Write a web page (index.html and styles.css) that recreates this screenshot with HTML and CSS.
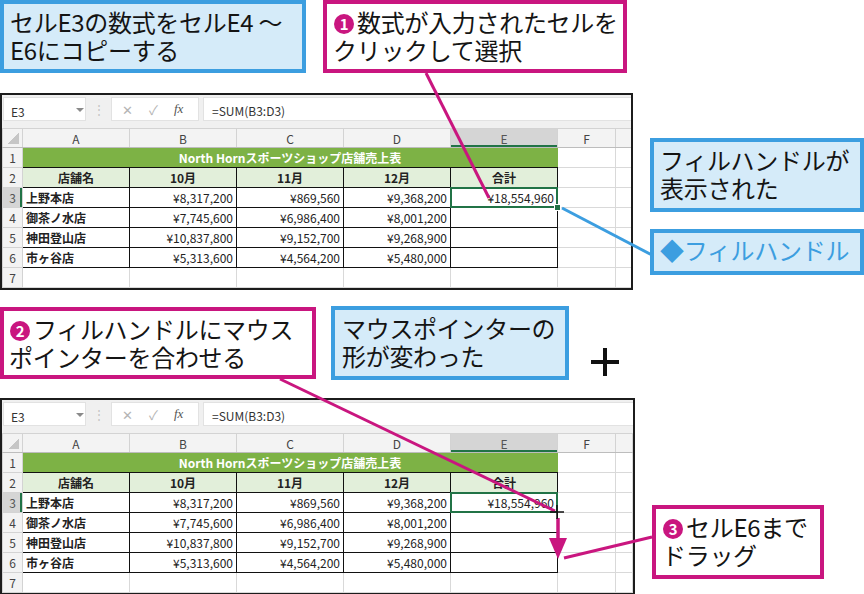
FILE: index.html
```html
<!DOCTYPE html>
<html>
<head>
    <meta charset="UTF-8">
    <title>フィルハンドルで数式をコピー</title>
    <link rel="stylesheet" href="styles.css">
</head>
<body>
    <section class="step step1">
        <div class="notes">
            <p class="note blue note-a">セルE3の数式をセルE4 ～<br>E6にコピーする</p>
            <p class="note pink note-b"><span class="num">1</span>数式が入力されたセルを<br>クリックして選択</p>
        </div>
        <div class="stage">
            <div class="sheet">
                <div class="fbar">
                    <div class="namebox">E3<span class="caret"></span></div>
                    <span class="grip">⋮</span>
                    <div class="fxbtns"><span>✕</span><span>✓</span><i>fx</i></div>
                    <div class="formula">=SUM(B3:D3)</div>
                </div>
                <table class="grid">
                    <colgroup><col class="c-rh"><col class="c-w"><col class="c-w"><col class="c-w"><col class="c-w"><col class="c-w"><col class="c-f"><col></colgroup>
                    <tr class="cols"><th class="corner"></th><th>A</th><th>B</th><th>C</th><th>D</th><th class="sel">E</th><th>F</th><th></th></tr>
                    <tr><th class="rh">1</th><td colspan="5" class="title">North Hornスポーツショップ店舗売上表</td><td></td><td></td></tr>
                    <tr class="hd"><th class="rh">2</th><td>店舗名</td><td>10月</td><td>11月</td><td>12月</td><td class="last">合計</td><td></td><td></td></tr>
                    <tr class="dt"><th class="rh sel">3</th><td class="name">上野本店</td><td>¥8,317,200</td><td>¥869,560</td><td>¥9,368,200</td><td class="last active">¥18,554,960</td><td></td><td></td></tr>
                    <tr class="dt"><th class="rh">4</th><td class="name">御茶ノ水店</td><td>¥7,745,600</td><td>¥6,986,400</td><td>¥8,001,200</td><td class="last"></td><td></td><td></td></tr>
                    <tr class="dt"><th class="rh">5</th><td class="name">神田登山店</td><td>¥10,837,800</td><td>¥9,152,700</td><td>¥9,268,900</td><td class="last"></td><td></td><td></td></tr>
                    <tr class="dt end"><th class="rh">6</th><td class="name">市ヶ谷店</td><td>¥5,313,600</td><td>¥4,564,200</td><td>¥5,480,000</td><td class="last"></td><td></td><td></td></tr>
                    <tr><th class="rh">7</th><td></td><td></td><td></td><td></td><td></td><td></td><td></td></tr>
                </table>
            </div>
            <div class="side side1">
                <p class="note blue note-c">フィルハンドルが<br>表示された</p>
                <p class="note blue note-tag">◆フィルハンドル</p>
            </div>
        </div>
    </section>

    <section class="step step2">
        <div class="notes">
            <p class="note pink note-d"><span class="num">2</span>フィルハンドルにマウス<br>ポインターを合わせる</p>
            <p class="note blue note-e">マウスポインターの<br>形が変わった</p>
            <svg class="cross" width="30" height="30" viewBox="0 0 30 30">
                <path d="M15 1V29M1 15H29" stroke="#111" stroke-width="4"/>
            </svg>
        </div>
        <div class="stage">
            <div class="sheet">
                <div class="fbar">
                    <div class="namebox">E3<span class="caret"></span></div>
                    <span class="grip">⋮</span>
                    <div class="fxbtns"><span>✕</span><span>✓</span><i>fx</i></div>
                    <div class="formula">=SUM(B3:D3)</div>
                </div>
                <table class="grid">
                    <colgroup><col class="c-rh"><col class="c-w"><col class="c-w"><col class="c-w"><col class="c-w"><col class="c-w"><col class="c-f"><col></colgroup>
                    <tr class="cols"><th class="corner"></th><th>A</th><th>B</th><th>C</th><th>D</th><th class="sel">E</th><th>F</th><th></th></tr>
                    <tr><th class="rh">1</th><td colspan="5" class="title">North Hornスポーツショップ店舗売上表</td><td></td><td></td></tr>
                    <tr class="hd"><th class="rh">2</th><td>店舗名</td><td>10月</td><td>11月</td><td>12月</td><td class="last">合計</td><td></td><td></td></tr>
                    <tr class="dt"><th class="rh sel">3</th><td class="name">上野本店</td><td>¥8,317,200</td><td>¥869,560</td><td>¥9,368,200</td><td class="last active nohandle">¥18,554,960</td><td></td><td></td></tr>
                    <tr class="dt"><th class="rh">4</th><td class="name">御茶ノ水店</td><td>¥7,745,600</td><td>¥6,986,400</td><td>¥8,001,200</td><td class="last"></td><td></td><td></td></tr>
                    <tr class="dt"><th class="rh">5</th><td class="name">神田登山店</td><td>¥10,837,800</td><td>¥9,152,700</td><td>¥9,268,900</td><td class="last"></td><td></td><td></td></tr>
                    <tr class="dt end"><th class="rh">6</th><td class="name">市ヶ谷店</td><td>¥5,313,600</td><td>¥4,564,200</td><td>¥5,480,000</td><td class="last"></td><td></td><td></td></tr>
                    <tr><th class="rh">7</th><td></td><td></td><td></td><td></td><td></td><td></td><td></td></tr>
                </table>
            </div>
            <div class="side side2">
                <p class="note pink note-f"><span class="num">3</span>セルE6まで<br>ドラッグ</p>
            </div>
        </div>
    </section>

    <!-- 引き出し線 -->
    <svg class="wires" width="864" height="594" viewBox="0 0 864 594">
        <g stroke-width="3" fill="none">
            <path d="M426 73L489 198" stroke="#c9167f"/>
            <path d="M562 208L652 255" stroke="#3c9ee0"/>
            <path d="M280 379L555 511" stroke="#c9167f"/>
            <path d="M558 518V540" stroke="#c9167f" stroke-width="3.5"/>
            <path d="M564 558L652 537" stroke="#c9167f"/>
        </g>
        <path d="M549 538H567L558 559Z" fill="#c9167f"/>
        <path d="M557 505V519M550 512H564" stroke="#111" stroke-width="1.5"/>
    </svg>
</body>
</html>
```

FILE: styles.css
```css
* {
    margin: 0;
    padding: 0;
    box-sizing: border-box;
}
body {
    width: 864px;
    height: 594px;
    overflow: hidden;
    position: relative;
    background: #fff;
    color: #141414;
    font-family: "Noto Sans CJK JP", "Noto Sans", sans-serif;
}

/* 吹き出し */
.notes{display:flex;align-items:flex-start;}
.note{font-size:24px;line-height:28px;padding:4px 0 0 6px;white-space:nowrap;letter-spacing:-0.3px;}
.blue{background:#d5ebf9;border:4px solid #3c9ee0;}
.pink{background:#fff;border:4px solid #c9167f;}
.num{display:inline-block;width:20px;height:20px;margin:0 3px 0 1px;border-radius:50%;background:#c9167f;color:#fff;font-size:15px;line-height:20px;font-weight:700;text-align:center;vertical-align:2px;}

.step1 .notes{height:93px;}
.note-a{width:306px;height:73px;}
.note-b{width:304px;height:73px;margin-left:17px;}

.step2 .notes{height:92px;margin-top:16px;}
.note-d{width:316px;height:72px;margin-top:1px;padding-left:5px;}
.note-e{width:238px;height:74px;margin-left:15px;padding-left:7px;}
.cross{margin:41px 0 0 21px;}

.stage{display:flex;align-items:flex-start;}
.side{margin-left:17px;display:flex;flex-direction:column;}
.side1{padding-top:45px;}
.side2{padding-top:107px;}
.note-c{width:214px;height:74px;}
.note-tag{width:214px;height:46px;margin-top:17px;padding-top:3px;color:#3c9ee0;}
.note-f{width:172px;height:74px;}

/* シート */
.sheet{width:635px;height:197px;border:2px solid #1c1c1c;background:#f0f0f0;font-size:12px;color:#222;overflow:hidden;}
.fbar{display:flex;align-items:stretch;height:33px;padding:2px 0 7px;}
.namebox{position:relative;width:83px;margin-left:1px;background:#fff;border:1px solid #e2e2e2;padding:5px 0 0 7px;color:#333;}
.caret{position:absolute;left:72px;top:10px;border:4px solid transparent;border-top:4px solid #8a8a8a;border-bottom:0;}
.grip{width:25px;text-align:center;color:#c4c4c4;line-height:24px;}
.fxbtns{display:flex;align-items:center;width:88px;background:#fff;border:1px solid #e2e2e2;padding-left:10px;gap:16px;color:#b4b4b4;font-size:13px;}
.fxbtns i{font-family:"Liberation Serif",serif;color:#555;font-size:13px;}
.formula{flex:1;margin-left:4px;background:#fff;border:1px solid #e2e2e2;border-right:0;padding:4px 0 0 8px;color:#333;}

.grid{width:631px;table-layout:fixed;border-collapse:collapse;background:#fff;}
.c-rh{width:20px;}
.c-w{width:107px;}
.c-f{width:58px;}
.grid th,.grid td{height:20px;border:1px solid #d9d9d9;padding:0 3px;white-space:nowrap;overflow:visible;font-weight:400;}
.grid .cols th{height:19px;background:#f3f3f3;color:#444;text-align:center;border-color:#d3d3d3;border-bottom-color:#bdbdbd;}
.grid .cols th.corner{background:#f3f3f3 linear-gradient(135deg,transparent 50%,#c6c6c6 50%) no-repeat right 3px bottom 3px/11px 11px;}
.grid .cols th.sel{background:#d5d5d5;box-shadow:inset 0 -2px #217346;color:#555;}
.grid th.rh{background:#f3f3f3;color:#444;text-align:center;padding:0;border-color:#d3d3d3;}
.grid th.rh.sel{background:#d5d5d5;color:#555;box-shadow:inset -2px 0 #217346;}

.grid td.title{background:#7db245;color:#fff;font-weight:700;text-align:center;border-color:#7db245;border-bottom:1px solid #111;}
.grid .hd td{background:#e2efda;font-weight:700;text-align:center;border-color:#111;}
.grid .dt td{text-align:right;border-color:#111;color:#222;}
.grid .dt td.name{text-align:left;font-weight:700;}
.grid .hd td:nth-child(n+7),.grid .dt td:nth-child(n+7){background:#fff;border-color:#d9d9d9;}
.grid td.last{border-right:1px solid #111;}

.grid td.active{position:relative;}
.grid td.active::after{content:"";position:absolute;left:-1px;top:-1px;right:-1px;bottom:-1px;border:2px solid #217346;}
.grid td.active::before{content:"";position:absolute;right:-4px;bottom:-4px;width:5px;height:5px;background:#217346;border:1px solid #fff;z-index:1;}
.grid td.nohandle::before{display:none;}

/* 線 */
.wires{position:absolute;left:0;top:0;pointer-events:none;}
```
